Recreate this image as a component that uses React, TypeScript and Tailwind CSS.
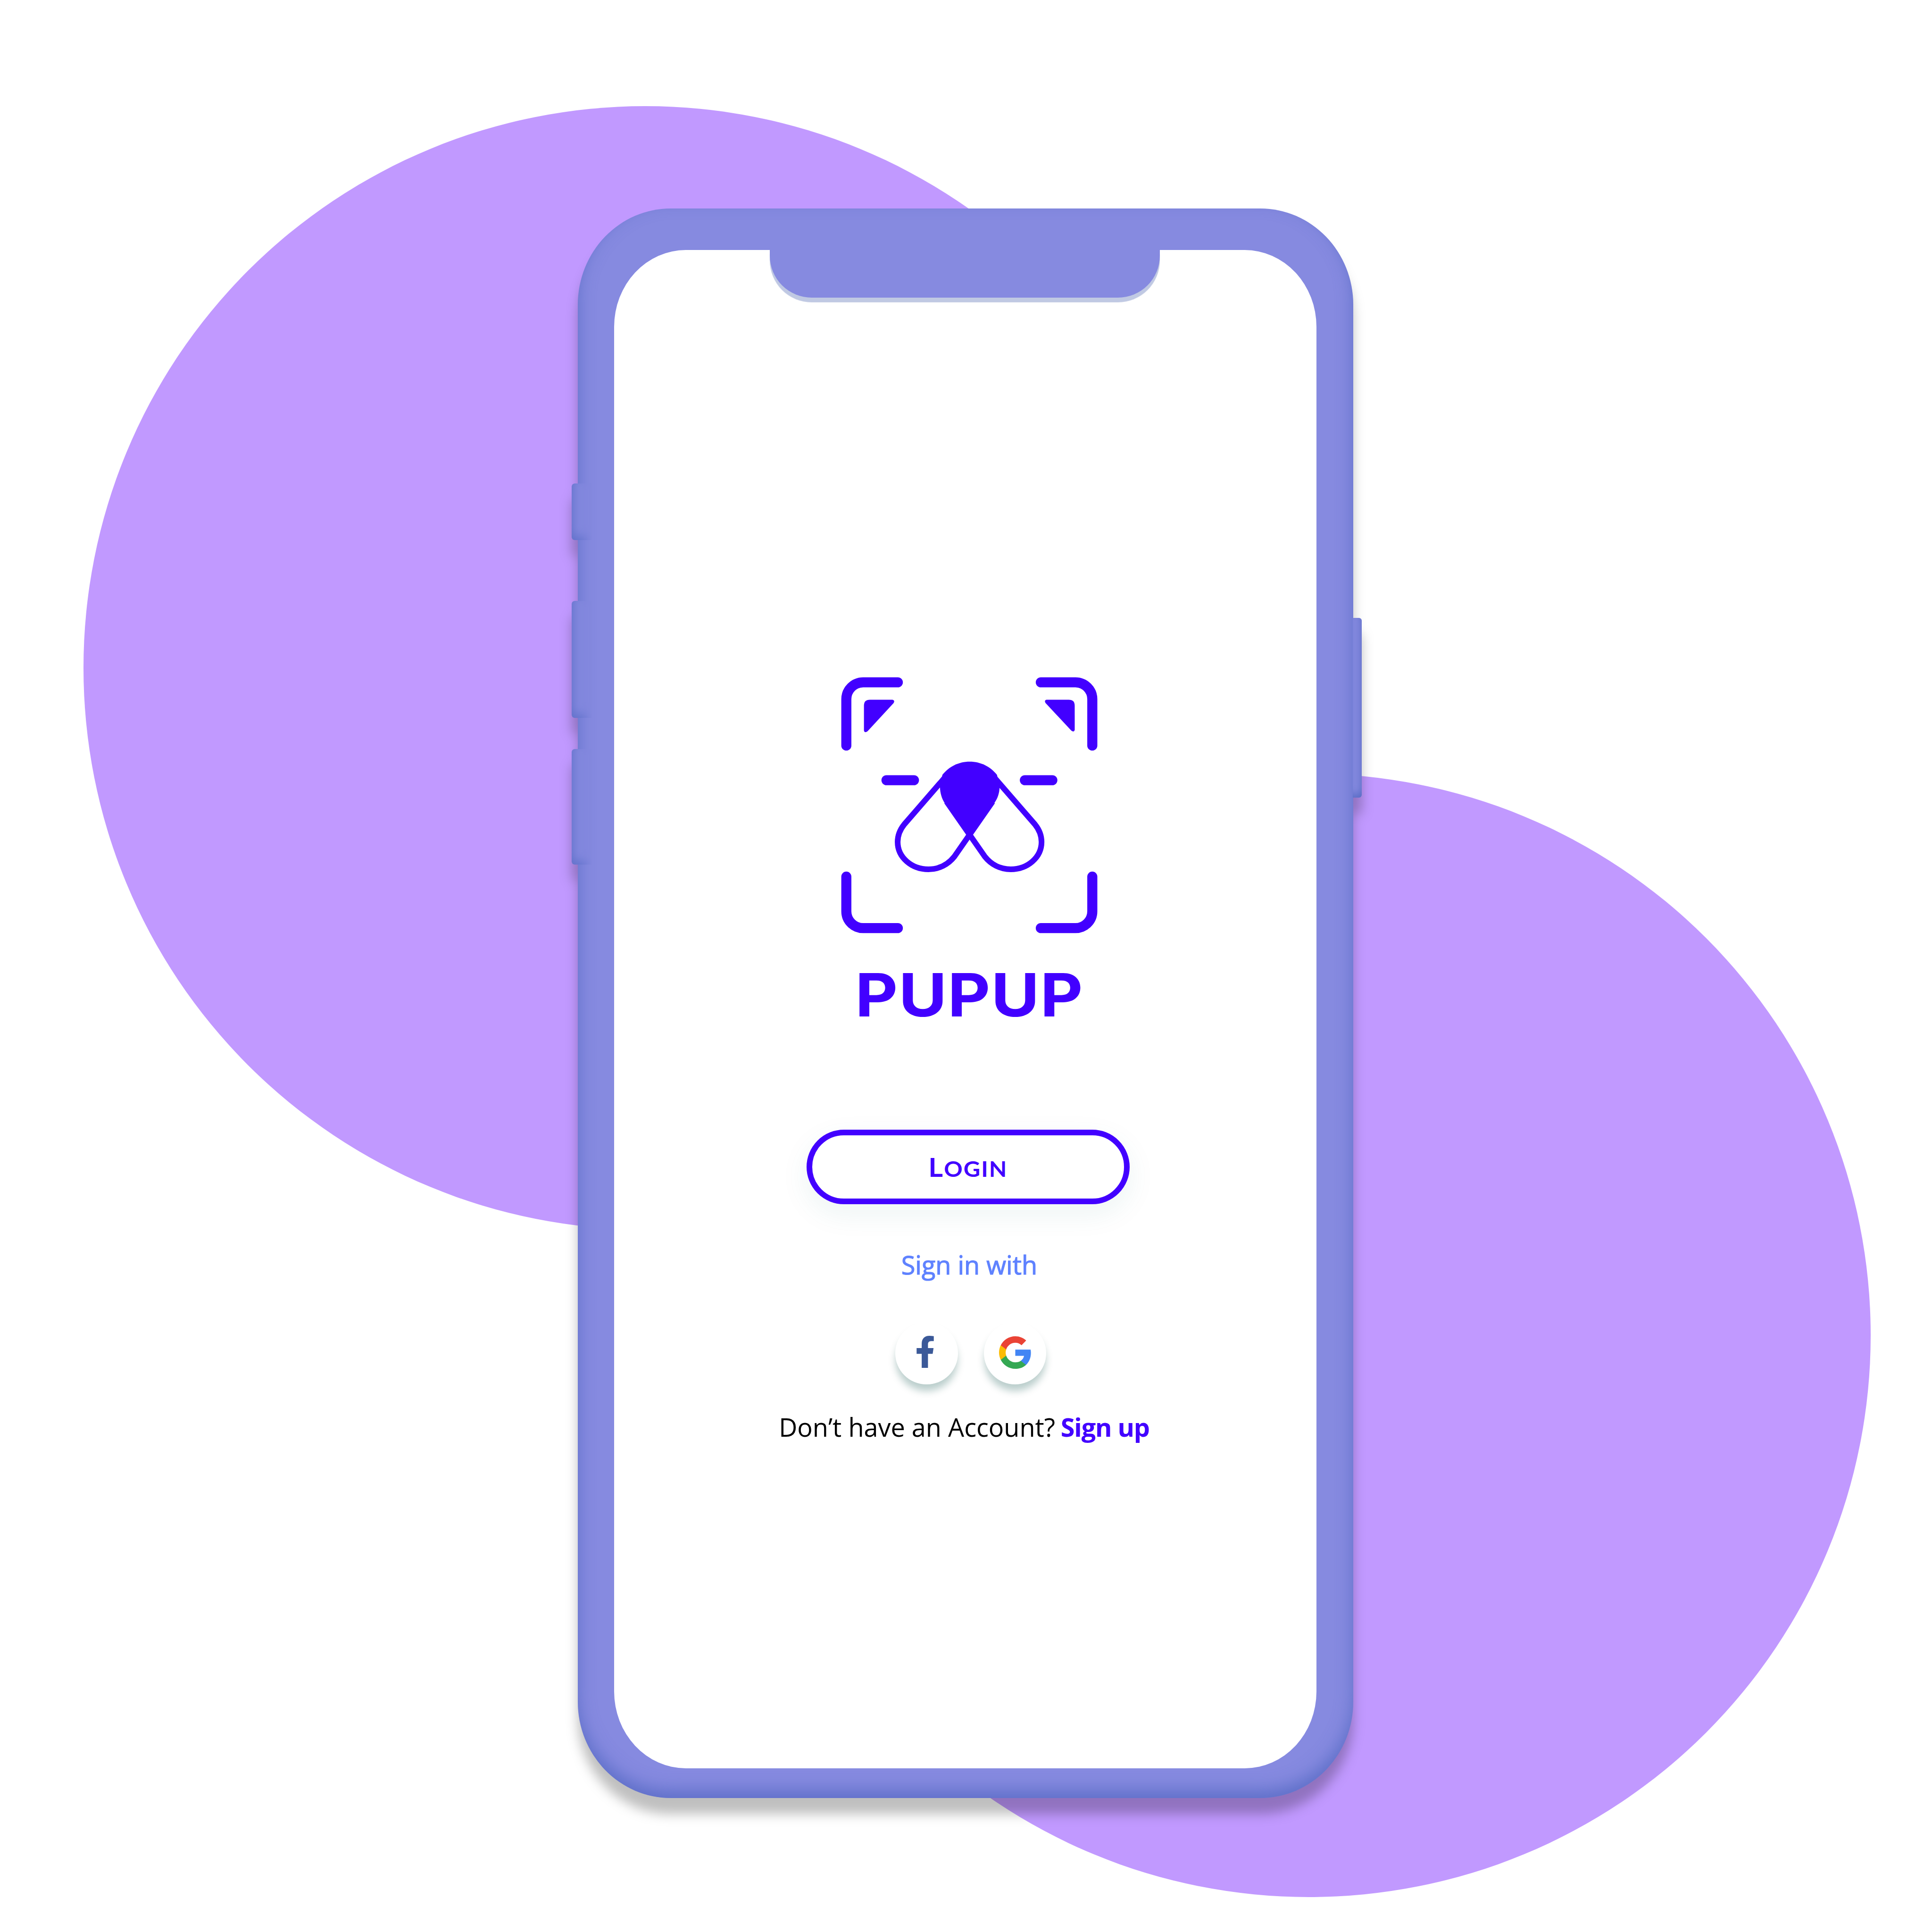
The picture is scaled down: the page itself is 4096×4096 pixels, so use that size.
import React from "react";
import { FaFacebookF } from "react-icons/fa";

function PupLogo() {
  const petal =
    "M652 626L430 882C404 914 394 944 394 978C394 1062 470 1127 562 1127C620 1127 670 1100 704 1057L912 758";
  return (
    <svg viewBox="0 0 1568 1568" className="ml-[448px] mt-[774.6px] size-[609.3px] shrink-0" fill="none" stroke="#4200ff">
      <g strokeWidth="55" strokeLinecap="round">
        <path d="M114 452V199A92 92 0 0 1 206 107H395" />
        <path d="M1456 452V199A92 92 0 0 0 1364 107H1175" />
        <path d="M114 1167V1356A92 92 0 0 0 206 1448H395" />
        <path d="M1456 1167V1356A92 92 0 0 1 1364 1448H1175" />
        <path d="M333 641H483" />
        <path d="M1088 641H1238" />
      </g>
      <g fill="#4200ff" stroke="none">
        <path d="M210 234Q210 202 243 202H366Q381 206 372 220L230 374Q214 386 210 370Z" />
        <path d="M1360 234Q1360 202 1327 202H1206Q1192 206 1201 220L1341 370Q1356 382 1360 366Z" />
        <path d="M787 540C846 540 899 566 936 612L950 680C949 712 940 738 924 762L787 960L648 762C634 738 626 712 625 680L638 612C675 566 728 540 787 540Z" />
      </g>
      <g strokeWidth="31">
        <path d={petal} />
        <path d={petal} transform="translate(1573 0) scale(-1 1)" />
      </g>
    </svg>
  );
}

function GoogleMark() {
  return (
    <svg viewBox="1 1 22 22" className="mb-[4px] ml-[2px] h-[71px] w-[69px]">
      <path fill="#4285F4" d="M22.56 12.25c0-.78-.07-1.53-.2-2.25H12v4.26h5.92c-.26 1.37-1.04 2.53-2.21 3.31v2.77h3.57c2.08-1.92 3.28-4.74 3.28-8.09z" />
      <path fill="#34A853" d="M12 23c2.97 0 5.46-.98 7.28-2.66l-3.57-2.77c-.98.66-2.23 1.06-3.71 1.06-2.86 0-5.29-1.93-6.16-4.53H2.18v2.84C3.99 20.53 7.7 23 12 23z" />
      <path fill="#FBBC05" d="M5.84 14.09c-.22-.66-.35-1.36-.35-2.09s.13-1.43.35-2.09V7.07H2.18C1.43 8.55 1 10.22 1 12s.43 3.45 1.18 4.93l3.66-2.84z" />
      <path fill="#EA4335" d="M12 5.38c1.62 0 3.06.56 4.21 1.64l3.15-3.15C17.45 2.09 14.97 1 12 1 7.7 1 3.99 3.47 2.18 7.07l3.66 2.84c.87-2.6 3.3-4.53 6.16-4.53z" />
    </svg>
  );
}

const social =
  "flex size-[132.5px] items-center justify-center rounded-full bg-white shadow-[0_15px_16px_-1px_rgba(5,75,65,0.27)]";

const sideKey =
  "absolute left-[-13.5px] w-[44px] rounded-l-[6px] bg-[#868ae0] shadow-[inset_8px_-10px_22px_-4px_rgba(70,95,185,0.55)] [mask-image:linear-gradient(to_right,black_32%,transparent)]";

function Screen() {
  return (
    <div className="flex h-[3219.4px] w-[1489.7px] flex-col items-start overflow-hidden rounded-[152px/163px] bg-white">
      <div className="ml-[330.8px] h-[101.2px] w-[827px] shrink-0 rounded-b-[89px] bg-[#868ae0] shadow-[0_9.5px_1px_#c0c9e3]" />
      <PupLogo />
      <div className="ml-[511px] mt-[14.4px] h-[160px] origin-left scale-x-110 whitespace-nowrap font-['Inter'] text-[127px] font-bold leading-[160px] tracking-[1.5px] text-[#4200ff]">
        PUPUP
      </div>
      <button className="ml-[408px] mt-[205.9px] flex h-[158px] w-[685.5px] shrink-0 items-center justify-center rounded-full border-[12.5px] border-[#4200ff] bg-white font-['Lato'] text-[56px] font-bold leading-none text-[#4200ff] shadow-[0_20px_60px_rgba(20,120,120,0.08)]">
        <span className="scale-x-[1.06] whitespace-nowrap tracking-[2px]">
          L<span className="text-[46px] leading-none">OGIN</span>
        </span>
      </button>
      <div className="ml-[609px] mt-[88.2px] h-[80px] whitespace-nowrap font-['Open_Sans'] text-[54px] font-medium leading-[80px] text-[#5f82ff] [-webkit-text-stroke:1.2px_#5f82ff]">
        Sign in with
      </div>
      <div className="ml-[596.5px] mt-[81.6px] flex gap-[55px]">
        <div className={social}>
          <FaFacebookF className="mb-[6px] mr-[5px] h-[68px] w-[43px] text-[#3b5998]" />
        </div>
        <div className={social}>
          <GoogleMark />
        </div>
      </div>
      <div className="ml-[349.5px] mt-[49.6px] flex h-[80px] whitespace-nowrap font-['Open_Sans'] text-[54px] leading-[80px] text-black">
        <span className="w-[597.5px]">Don’t have an Account?</span>
        <span className="font-bold tracking-[-1.1px] text-[#4200ff]">Sign up</span>
      </div>
    </div>
  );
}

export default function App() {
  return (
    <div className="relative flex h-[4096px] w-[4096px] items-start overflow-hidden bg-white">
      <div className="absolute left-[177.2px] top-[224.5px] size-[2382px] rounded-full bg-[#c199ff]" />
      <div className="absolute left-[1584.2px] top-[1640px] size-[2382px] rounded-full bg-[#c199ff]" />
      <div className="relative ml-[1225.4px] mt-[442.2px] [filter:drop-shadow(0_34px_12px_rgba(0,0,0,0.25))]">
        <div className="h-[3369.5px] w-[1643.3px] rounded-[197px/204px] bg-[#868ae0] pl-[76.3px] pt-[87.5px] shadow-[inset_0_-17px_35px_-1px_rgba(70,95,185,0.62)]">
          <Screen />
        </div>
        <div className={`${sideKey} top-[583px] h-[119.6px]`} />
        <div className={`${sideKey} top-[832.2px] h-[247.5px]`} />
        <div className={`${sideKey} top-[1146.2px] h-[245px]`} />
        <div className="absolute left-[1643px] top-[867.5px] h-[381.3px] w-[19px] rounded-r-[6px] bg-[#868ae0] shadow-[inset_-5px_-10px_18px_-4px_rgba(70,95,185,0.7)]" />
      </div>
    </div>
  );
}
